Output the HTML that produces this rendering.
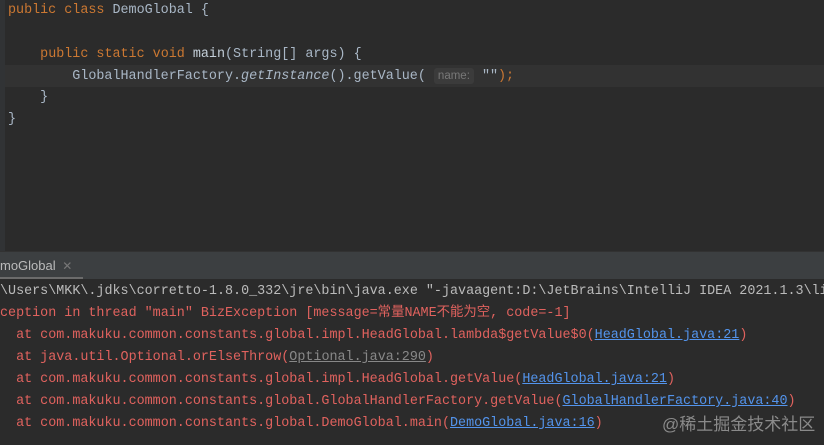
<!DOCTYPE html><html><head><style>
body{margin:0;width:824px;height:445px;background:#2b2b2b;overflow:hidden;position:relative;font-family:"Liberation Mono","Noto Sans CJK SC",monospace;font-size:13.4px}
.l{position:absolute;left:0;white-space:pre;height:22px;line-height:22px}
.k{color:#cc7832}.t{color:#a9b7c6}.f{color:#c5d0da}.i{font-style:italic}
.h{color:#787878;background:#3b3b3b;font-family:"Liberation Sans",sans-serif;font-size:11.5px;padding:2px 4px;border-radius:3px}
.r{color:#e0625e}.g{color:#bbbbbb}
.a{color:#5394ec;text-decoration:underline}.o{color:#888;text-decoration:underline}
</style></head><body>
<div style="position:absolute;left:0;top:0;width:5px;height:252px;background:#313335"></div>
<div style="position:absolute;left:5px;top:65px;width:819px;height:22px;background:#323232"></div>
<div class="l t" style="top:0;left:8px"><span class="k">public class </span>DemoGlobal {</div>
<div class="l t" style="top:44px;left:8px">    <span class="k">public static void </span><span class="f">main</span>(String[] args) {</div>
<div class="l t" style="top:65px;left:8px">        GlobalHandlerFactory.<span class="i">getInstance</span>().getValue( <span class="h">name:</span> <span style="color:#a9b7c6">""</span><span class="k">);</span></div>
<div class="l t" style="top:87px;left:8px">    }</div>
<div class="l t" style="top:109px;left:8px">}</div>
<div style="position:absolute;left:0;top:251px;width:824px;height:1px;background:#323232"></div>
<div style="position:absolute;left:0;top:252px;width:824px;height:27px;background:#3c3f41"></div>
<div style="position:absolute;left:0;top:256px;color:#bbb;font-family:'Liberation Sans',sans-serif;font-size:13px;line-height:20px">moGlobal <span style="color:#777;font-size:12px;margin-left:3px">✕</span></div>
<div style="position:absolute;left:0;top:277px;width:83px;height:2px;background:#6b6b6b"></div>
<div class="l g" style="top:281px">\Users\MKK\.jdks\corretto-1.8.0_332\jre\bin\java.exe "-javaagent:D:\JetBrains\IntelliJ IDEA 2021.1.3\li</div>
<div class="l r" style="top:303px">ception in thread "main" BizException [message=常量NAME不能为空, code=-1]</div>
<div class="l r" style="top:325px">  at com.makuku.common.constants.global.impl.HeadGlobal.lambda$getValue$0(<span class="a">HeadGlobal.java:21</span>)</div>
<div class="l r" style="top:347px">  at java.util.Optional.orElseThrow(<span class="o">Optional.java:290</span>)</div>
<div class="l r" style="top:369px">  at com.makuku.common.constants.global.impl.HeadGlobal.getValue(<span class="a">HeadGlobal.java:21</span>)</div>
<div class="l r" style="top:391px">  at com.makuku.common.constants.global.GlobalHandlerFactory.getValue(<span class="a">GlobalHandlerFactory.java:40</span>)</div>
<div class="l r" style="top:413px">  at com.makuku.common.constants.global.DemoGlobal.main(<span class="a">DemoGlobal.java:16</span>)</div>
<div style="position:absolute;left:662px;top:414px;color:#8a8a8a;font-family:'Liberation Sans','Noto Sans CJK SC',sans-serif;font-size:17px;line-height:22px;white-space:nowrap">@稀土掘金技术社区</div>
</body></html>
